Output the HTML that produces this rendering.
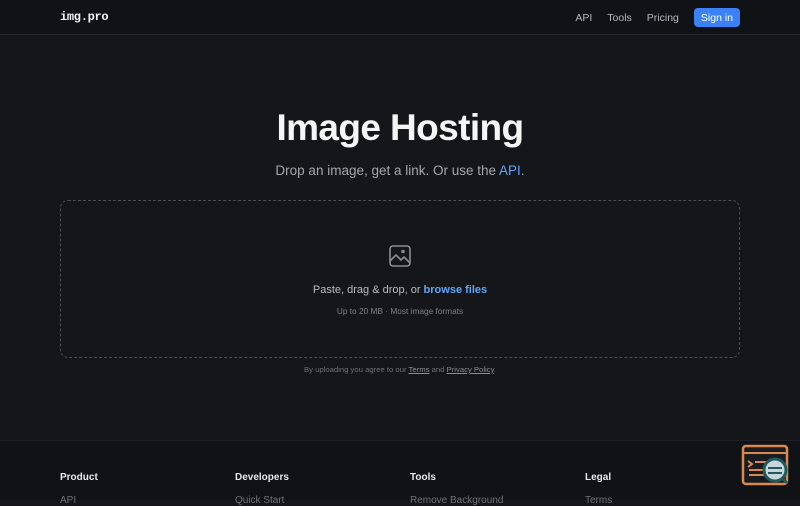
<!DOCTYPE html>
<html><head><style>
*{margin:0;padding:0;box-sizing:border-box}
body{width:800px;height:500px;overflow:hidden;background:#151619;font-family:"Liberation Sans",sans-serif;color:#e5e7eb;position:relative}
.hdr{height:35px;border-bottom:1px solid #24262b;background:#111216;position:relative}
.logo{position:absolute;left:60px;top:10px;font-family:"Liberation Mono",monospace;font-weight:bold;font-size:12px;color:#f3f4f6;letter-spacing:-0.3px}
.nav{position:absolute;right:60px;top:8px;display:flex;align-items:center;font-size:10.5px;color:#b4b8bf;height:19px}
.nav span{margin-right:15px}
.btn{background:#3b82f6;color:#fff;border-radius:4px;padding:0 7px;font-size:10.5px;height:19px;display:flex;align-items:center;white-space:nowrap}
h1{position:absolute;top:107px;width:100%;text-align:center;font-size:37px;font-weight:bold;color:#f5f5f5;letter-spacing:-0.6px}
.sub{position:absolute;top:163px;width:100%;text-align:center;font-size:13.5px;color:#a3a7ae}
.sub b{color:#60a5fa;font-weight:normal}
.drop{position:absolute;left:60px;top:200px;width:680px;height:158px;border:1px dashed #4a4d54;border-radius:8px}
.icon{position:absolute;left:388px;top:244px}
.t1{position:absolute;top:284px;width:100%;text-align:center;font-size:11px;color:#b9bcc2}
.t1 b{color:#60a5fa;font-weight:bold}
.t2{position:absolute;top:306px;width:100%;text-align:center;font-size:8.3px;color:#7d8088}
.t3{position:absolute;top:365px;width:100%;text-align:center;font-size:7.7px;color:#6f7279}
.t3 u{color:#8a8d94}
.ftr{position:absolute;top:440px;left:0;width:800px;height:60px;background:#111216;border-top:1px solid #1e2024}
.col{position:absolute;top:31px;font-size:10px;font-weight:bold;color:#e8e9eb}
.col i{display:block;font-style:normal;font-weight:normal;color:#6f7279;margin-top:12px}
</style></head><body>
<div class="hdr"><div class="logo">img.pro</div>
<div class="nav"><span>API</span><span>Tools</span><span>Pricing</span><div class="btn">Sign in</div></div></div>
<h1>Image Hosting</h1>
<div class="sub">Drop an image, get a link. Or use the <b>API</b>.</div>
<div class="drop"></div>
<svg class="icon" width="24" height="24" viewBox="0 0 24 24" fill="none" stroke="#8a8d94" stroke-width="1.6" stroke-linejoin="round"><rect x="2" y="2" width="20" height="20" rx="3"/><path d="M2 17l6-6 5 5 3-3 6 6"/><circle cx="15" cy="7.5" r="1"/></svg>
<div class="t1">Paste, drag &amp; drop, or <b>browse files</b></div>
<div class="t2">Up to 20 MB · Most image formats</div>
<div class="t3">By uploading you agree to our <u>Terms</u> and <u>Privacy Policy</u>.</div>
<div class="ftr">
<div class="col" style="left:60px">Product<i>API</i></div>
<div class="col" style="left:235px">Developers<i>Quick Start</i></div>
<div class="col" style="left:410px">Tools<i>Remove Background</i></div>
<div class="col" style="left:585px">Legal<i>Terms</i></div>
</div>
<svg style="position:absolute;left:741px;top:444px" width="50" height="44" viewBox="0 0 50 44"><rect x="2" y="2" width="44" height="38" rx="3" fill="#1a1b1e" stroke="#d98a52" stroke-width="2.5"/><line x1="2" y1="9" x2="46" y2="9" stroke="#d98a52" stroke-width="2"/><path d="M7 17l4 3-4 3M14 18h14M8 26h20M8 31h20" stroke="#d98a52" stroke-width="2" fill="none"/><circle cx="34" cy="26" r="11" fill="#c8d6da" stroke="#1e5a5e" stroke-width="3"/><path d="M27 24h14M27 29h14" stroke="#1e5a5e" stroke-width="2"/><path d="M41 34l5 5" stroke="#1e5a5e" stroke-width="3"/></svg>
</body></html>
